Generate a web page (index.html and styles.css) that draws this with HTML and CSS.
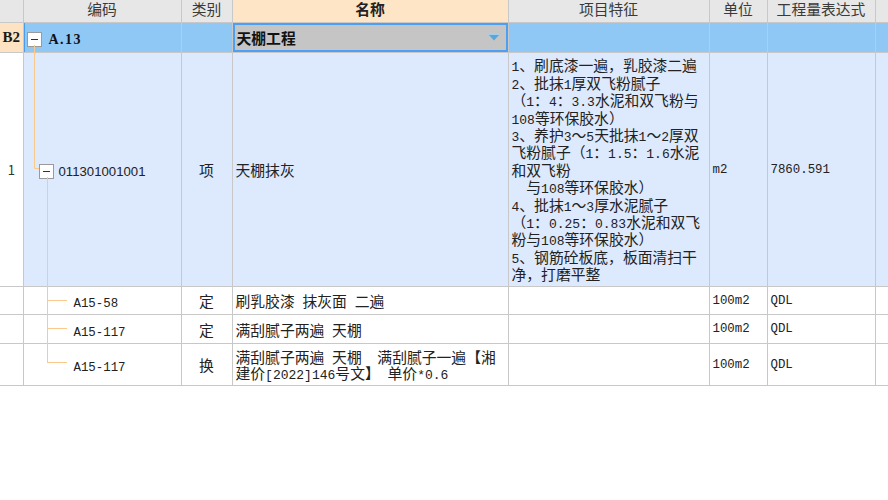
FILE: index.html
```html
<!DOCTYPE html>
<html lang="zh-CN">
<head>
<meta charset="utf-8">
<title>清单</title>
<link rel="stylesheet" href="styles.css">
</head>
<body>
<div class="wrap">
  <table class="grid">
    <colgroup>
      <col class="c-no"><col class="c-code"><col class="c-type"><col class="c-name"><col class="c-feat"><col class="c-unit"><col class="c-expr"><col class="c-extra">
    </colgroup>
    <thead>
      <tr class="hd">
        <th></th><th>编码</th><th>类别</th><th class="hd-name">名称</th><th>项目特征</th><th>单位</th><th>工程量表达式</th><th></th>
      </tr>
    </thead>
    <tbody>
      <tr class="r-sec">
        <td class="no no-sec">B2</td>
        <td class="code code-sec"><span class="exp"></span><span class="sec-code">A.13</span></td>
        <td></td>
        <td class="name-edit"><div class="editor"><span class="editor-text">天棚工程</span><svg class="dd" width="12" height="7" viewBox="0 0 12 7"><path d="M0.5 0.5H11.5L6 6.5Z" fill="#5aa6d6"/><path d="M0.5 0.5H11.5" stroke="#9fd0ee" stroke-width="1"/></svg></div></td>
        <td></td><td></td><td></td><td></td>
      </tr>
      <tr class="r-item">
        <td class="no">1</td>
        <td class="code code-l1"><span class="exp"></span><span class="num">011301001001</span></td>
        <td class="type">项</td>
        <td class="name">天棚抹灰</td>
        <td class="feat"><span class="h">1</span>、刷底漆一遍，乳胶漆二遍<br><span class="h">2</span>、批抹<span class="h">1</span>厚双飞粉腻子<br><span class="fw">（</span><span class="h">1</span><span class="fw">：</span><span class="h">4</span><span class="fw">：</span><span class="h">3.3</span>水泥和双飞粉与<br><span class="h">108</span>等环保胶水）<br><span class="h">3</span>、养护<span class="h">3</span>～<span class="h">5</span>天批抹<span class="h">1</span>～<span class="h">2</span>厚双<br>飞粉腻子<span class="fw">（</span><span class="h">1</span><span class="fw">：</span><span class="h">1.5</span><span class="fw">：</span><span class="h">1.6</span>水泥<br>和双飞粉<br>　与<span class="h">108</span>等环保胶水）<br><span class="h">4</span>、批抹<span class="h">1</span>～<span class="h">3</span>厚水泥腻子<br><span class="fw">（</span><span class="h">1</span><span class="fw">：</span><span class="h">0.25</span><span class="fw">：</span><span class="h">0.83</span>水泥和双飞<br>粉与<span class="h">108</span>等环保胶水）<br><span class="h">5</span>、钢筋砼板底，板面清扫干<br>净，打磨平整</td>
        <td class="mono">m2</td>
        <td class="mono">7860.591</td>
        <td></td>
      </tr>
      <tr class="r-sub r-sub1">
        <td class="no"></td>
        <td class="code code-l2"><span class="mono-t">A15-58</span></td>
        <td class="type">定</td>
        <td class="name">刷乳胶漆<span class="h"> </span>抹灰面<span class="h"> </span>二遍</td>
        <td></td>
        <td class="mono">100m2</td>
        <td class="mono">QDL</td>
        <td></td>
      </tr>
      <tr class="r-sub r-sub2">
        <td class="no"></td>
        <td class="code code-l2"><span class="mono-t">A15-117</span></td>
        <td class="type">定</td>
        <td class="name">满刮腻子两遍<span class="h"> </span>天棚</td>
        <td></td>
        <td class="mono">100m2</td>
        <td class="mono">QDL</td>
        <td></td>
      </tr>
      <tr class="r-sub r-sub3">
        <td class="no"></td>
        <td class="code code-l2"><span class="mono-t">A15-117</span></td>
        <td class="type">换</td>
        <td class="name name-2l">满刮腻子两遍<span class="h"> </span>天棚<span class="h">  </span>满刮腻子一遍<span class="fw">【</span>湘<br>建价<span class="h">[2022]146</span>号文<span class="fw">】</span><span class="h"> </span>单价<span class="h">*0.6</span></td>
        <td></td>
        <td class="mono">100m2</td>
        <td class="mono">QDL</td>
        <td></td>
      </tr>
    </tbody>
  </table>
  <svg class="tree" width="888" height="500" viewBox="0 0 888 500">
    <g stroke="#fcc98c" stroke-width="1" fill="none">
      <path d="M34.5 45V168.5H39"/>
      <path d="M47.5 177V362.5"/>
      <path d="M47 300.5H67"/>
      <path d="M47 328.5H67"/>
      <path d="M47 362.5H67"/>
    </g>
  </svg>
</div>
</body>
</html>
```

FILE: styles.css
```css
html, body {
  margin: 0;
  padding: 0;
  background: #ffffff;
}

body {
  width: 888px;
  height: 500px;
  overflow: hidden;
  font-family: "Noto Sans CJK SC", "Noto Sans", sans-serif;
  font-size: 14.8px;
  color: #222222;
  text-spacing-trim: space-all;
}

.wrap {
  position: relative;
  width: 888px;
  height: 500px;
  overflow: hidden;
}

.grid {
  border-collapse: collapse;
  table-layout: fixed;
  width: 935px;
}

.c-no { width: 23px; }
.c-code { width: 158px; }
.c-type { width: 51px; }
.c-name { width: 276px; }
.c-feat { width: 201px; }
.c-unit { width: 58px; }
.c-expr { width: 108px; }
.c-extra { width: 60px; }

.grid th,
.grid td {
  border: 1px solid #c8c8c8;
  border-top: none;
  border-left: none;
  padding: 0 3px;
  white-space: nowrap;
  vertical-align: middle;
  text-align: left;
}

.grid td {
  overflow: hidden;
}

/* header */
.hd th {
  height: 22px;
  background: #e7e7e7;
  color: #3a3a3a;
  font-weight: normal;
  text-align: center;
  vertical-align: top;
  line-height: 18px;
}

.hd .hd-name {
  background: #fde5c6;
  color: #222;
  font-weight: bold;
}

/* section row */
.r-sec td {
  height: 29px;
  background: #90c8f5;
}

.r-sec .no-sec {
  background: #fde3c1;
  font-family: "Liberation Serif", serif;
  font-weight: bold;
  font-size: 15px;
  padding: 0 0 0 1px;
  color: #1a1a1a;
}

.code-sec {
  padding-left: 3px;
  box-shadow: inset 1px 0 0 #4a9cf2;
}

.exp {
  display: inline-block;
  width: 13px;
  height: 13px;
  border: 1px solid #9a9a9a;
  background: #ffffff;
  position: relative;
  vertical-align: middle;
  box-sizing: content-box;
}

.exp::after {
  content: "";
  position: absolute;
  left: 3px;
  top: 6px;
  width: 7px;
  height: 1px;
  background: #333;
}

.sec-code {
  font-family: "Liberation Serif", serif;
  font-weight: bold;
  font-size: 14px;
  letter-spacing: 1.5px;
  margin-left: 7px;
  vertical-align: middle;
  color: #111;
}

.name-edit {
  padding: 0 !important;
}

.editor {
  box-sizing: border-box;
  height: 29px;
  margin: -1px 0 0 0;
  border: 2px solid #4d9ff3;
  background: #c5c5c5;
  display: flex;
  align-items: center;
  justify-content: space-between;
  padding: 0 6px 0 2px;
}

.editor-text {
  font-weight: bold;
  color: #111;
}

.dd {
  display: block;
}

/* item row */
.r-item td {
  height: 233px;
  background: #dde9fc;
}

.r-item .no {
  background: #ffffff;
}

.no {
  text-align: center !important;
  padding: 0 !important;
  color: #333;
  font-size: 13px;
}

.code-l1 {
  padding-left: 15px !important;
}

.num {
  font-family: "Liberation Sans", sans-serif;
  font-size: 13.2px;
  margin-left: 5px;
  vertical-align: middle;
}

.type {
  text-align: center !important;
}

.name {
  padding-left: 3px;
}

.feat {
  line-height: 17.4px;
  padding: 0 2px 0 3px !important;
}

.h {
  font-family: "Liberation Mono", monospace;
  font-size: 13px;
  line-height: 0;
  white-space: pre;
}

.fw {
  display: inline-block;
  width: 1em;
  line-height: 1;
  text-align: center;
}

.mono {
  font-family: "Liberation Mono", monospace;
  font-size: 12.4px;
  color: #222;
}

.mono-t {
  font-family: "Liberation Mono", monospace;
  font-size: 12.4px;
}

.code-l2 {
  padding-left: 50px !important;
}

.r-sub td {
  background: #ffffff;
}

.r-sub1 td { height: 27px; }
.r-sub2 td { height: 28px; }
.r-sub3 td { height: 41px; }

.name-2l {
  line-height: 15.5px;
}

.tree {
  position: absolute;
  left: 0;
  top: 0;
  pointer-events: none;
}
```
